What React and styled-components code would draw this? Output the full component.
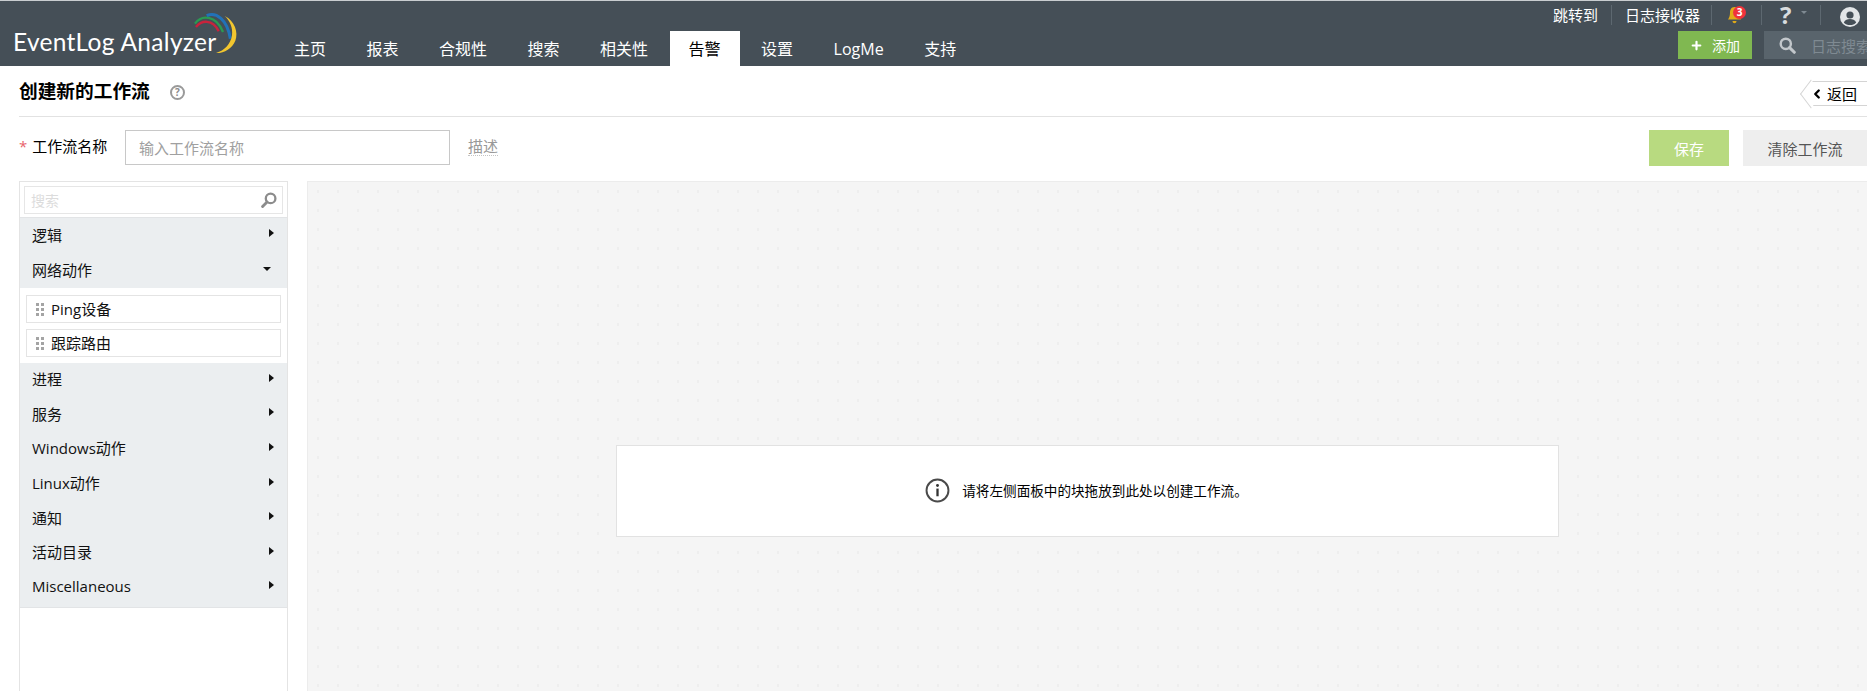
import React from 'react'
import styled, {createGlobalStyle} from 'styled-components'
import {Plus, ChevronLeft} from 'lucide-react'

const FONT = `"Open Sans", "Noto Sans CJK SC", sans-serif`

const GlobalStyle = createGlobalStyle`
  html, body {
    margin: 0;
    padding: 0;
    height: 100%;
    overflow: hidden;
    background: #fff;
    font-family: ${FONT};
  }
  * { box-sizing: border-box; }
`

const Page = styled.div`
  width: 1867px;
  height: 691px;
  display: flex;
  flex-direction: column;
  overflow: hidden;
`

const Header = styled.header`
  height: 66px;
  flex: none;
  background: #454f57;
  border-top: 1px solid #c9cdd0;
  display: flex;
  align-items: flex-end;
  color: #fff;
`

const Logo = styled.div`
  position: relative;
  width: 275px;
  flex: none;
  height: 65px;
  padding: 25px 0 0 13px;
  font-family: "Lato", "Open Sans", sans-serif;
  font-size: 24.5px;
  line-height: 32px;
  white-space: nowrap;
  letter-spacing: 0.3px;
  svg {
    position: absolute;
    left: 180px;
    top: 7px;
  }
`

const Nav = styled.nav`
  display: flex;
  gap: 2.5px;
  height: 35px;
`

const Tab = styled.div`
  padding: 6px 19px 0;
  font-size: 16px;
  line-height: 24px;
  background: ${p => (p.$active ? '#fff' : 'transparent')};
  color: ${p => (p.$active ? '#000' : '#fff')};
`

const HeaderRight = styled.div`
  margin-left: auto;
  width: 316px;
  height: 65px;
  display: flex;
  flex-direction: column;
  align-items: flex-end;
  overflow: hidden;
`

const TopLinks = styled.div`
  height: 30px;
  padding-bottom: 2px;
  width: 100%;
  display: flex;
  align-items: center;
  justify-content: flex-end;
  font-size: 15px;
`

const TopLink = styled.div`
  height: 20px;
  line-height: 20px;
  padding-left: ${p => p.$pad || 0}px;
  width: ${p => p.$w}px;
  flex: none;
  border-right: ${p => (p.$noLine ? 'none' : '1px solid #5d6870')};
  display: flex;
  align-items: center;
  position: relative;
  white-space: nowrap;
  svg { flex: none; }
`

const Badge = styled.span`
  position: absolute;
  left: 21px;
  top: 1px;
  width: 13px;
  height: 13px;
  border-radius: 50%;
  background: #f0323c;
  color: #fff;
  font-size: 10px;
  line-height: 13px;
  font-weight: 700;
  text-align: center;
`

const Question = styled.span`
  font-size: 24px;
  line-height: 20px;
  font-weight: 700;
  color: #d8dcdf;
  font-family: "Open Sans", sans-serif;
`

const SmallCaret = styled.span`
  width: 0;
  height: 0;
  margin-left: 10px;
  margin-top: -6px;
  border-left: 3px solid transparent;
  border-right: 3px solid transparent;
  border-top: 3px solid #7f8a92;
`

const ActionRow = styled.div`
  display: flex;
  gap: 12px;
  height: 28px;
`

const AddButton = styled.div`
  width: 74px;
  background: #80b851;
  display: flex;
  align-items: center;
  font-size: 14px;
  padding-left: 12px;
  gap: 9px;
`

const HeaderSearch = styled.div`
  width: 103px;
  background: #59646c;
  color: #7f8a92;
  display: flex;
  align-items: center;
  font-size: 15px;
  padding-left: 15px;
  gap: 15px;
  white-space: nowrap;
  overflow: hidden;
  svg { flex: none; }
`

const Content = styled.main`
  flex: 1;
  min-height: 0;
  padding-left: 19px;
  display: flex;
  flex-direction: column;
`

const TitleBar = styled.div`
  height: 51px;
  flex: none;
  border-bottom: 1px solid #e2e2e2;
  display: flex;
  align-items: center;
  position: relative;
`

const Title = styled.h1`
  margin: 0;
  font-size: 18.7px;
  font-weight: 700;
  color: #000;
  line-height: 24px;
`

const HelpIcon = styled.span`
  margin: 3px 0 0 20px;
  width: 15px;
  height: 15px;
  border: 2px solid #9a9a9a;
  border-radius: 50%;
  color: #8a8a8a;
  font-size: 10px;
  line-height: 11px;
  font-weight: 700;
  text-align: center;
  font-family: "Open Sans", sans-serif;
`

const BackButton = styled.div`
  position: absolute;
  right: -10px;
  top: 15px;
  width: 67px;
  height: 25px;
  border: 1px solid #d4d4d4;
  border-left: none;
  display: flex;
  align-items: center;
  font-size: 15px;
  color: #000;
  background: #fff;
  gap: 3px;
  &::before {
    content: '';
    position: absolute;
    left: -8px;
    top: 3px;
    width: 17px;
    height: 17px;
    border-left: 1px solid #d4d4d4;
    border-bottom: 1px solid #d4d4d4;
    background: #fff;
    transform: rotate(45deg) skew(8deg, 8deg);
  }
  svg, span { position: relative; }
`

const FormRow = styled.div`
  height: 64px;
  flex: none;
  display: flex;
  align-items: flex-start;
  padding-top: 13px;
`

const Label = styled.label`
  width: 106px;
  flex: none;
  font-size: 15px;
  line-height: 32px;
  color: #000;
  white-space: nowrap;
  em {
    font-style: normal;
    color: #e8636b;
    margin-right: 5px;
  }
`

const NameInput = styled.input`
  width: 325px;
  height: 35px;
  border: 1px solid #c8c8c8;
  padding: 0 13px;
  font-family: ${FONT};
  font-size: 15px;
  outline: none;
  &::placeholder { color: #a0a0a0; opacity: 1; }
`

const DescLink = styled.span`
  margin: 7px 0 0 18px;
  font-size: 15px;
  line-height: 18px;
  color: #999;
  border-bottom: 1px dotted #c4c4c4;
`

const Buttons = styled.div`
  margin-left: auto;
  display: flex;
  gap: 14px;
`

const Button = styled.div`
  width: ${p => p.$w}px;
  height: 36px;
  display: flex;
  align-items: center;
  justify-content: center;
  font-size: 15px;
  background: ${p => p.$bg};
  color: ${p => p.$color};
`

const Workspace = styled.div`
  flex: 1;
  min-height: 0;
  display: flex;
  gap: 19px;
`

const Palette = styled.aside`
  width: 269px;
  flex: none;
  border: 1px solid #e4e4e4;
  border-width: 1px 1px 0 1px;
  background: #fff;
`

const PaletteSearch = styled.div`
  margin: 4px 4px 3px;
  height: 28px;
  border: 1px solid #e6e6e6;
  display: flex;
  align-items: center;
  justify-content: space-between;
  padding: 0 5px 0 6px;
  font-size: 14px;
  color: #dcdcdc;
`

const Group = styled.div`
  background: #ebeef0;
  border-top: ${p => (p.$lined ? '1px solid #e2e4e6' : 'none')};
  border-bottom: ${p => (p.$closed ? '1px solid #e2e4e6' : 'none')};
  padding-bottom: ${p => (p.$closed ? '2px' : '0')};
`

const GroupRow = styled.div`
  height: ${p => p.$h}px;
  display: flex;
  align-items: center;
  justify-content: space-between;
  padding: 0 13px 3px 12px;
  font-size: 15px;
  color: #111;
`

const Arrow = styled.span`
  width: 0;
  height: 0;
  ${p => p.$open
    ? `
    margin: 0 3px 0 0;
    border-left: 4px solid transparent;
    border-right: 4px solid transparent;
    border-top: 4px solid #111;`
    : `
    margin-top: -2px;
    border-top: 4.5px solid transparent;
    border-bottom: 4.5px solid transparent;
    border-left: 5.5px solid #111;`}
`

const Items = styled.div`
  padding: 7px 6px 6px;
  display: flex;
  flex-direction: column;
  gap: 6px;
`

const Item = styled.div`
  height: 28px;
  border: 1px solid #e4e4e4;
  display: flex;
  align-items: center;
  padding: 0 0 1px 8px;
  gap: 7px;
  font-size: 15px;
  color: #111;
`

const Grip = styled.span`
  width: 9px;
  height: 14px;
  flex: none;
  background-image: radial-gradient(circle, #a4a4a4 1.5px, transparent 1.8px);
  background-size: 5px 5px;
`

const Canvas = styled.section`
  flex: 1;
  min-width: 0;
  border: 1px solid #ececec;
  border-bottom: none;
  border-right: none;
  background-color: #f5f5f5;
  background-image: radial-gradient(circle, #eeeeee 1.2px, transparent 1.5px);
  background-size: 20px 19px;
  display: flex;
  justify-content: center;
  align-items: flex-start;
  padding: 263px 0 0;
`

const Notice = styled.div`
  width: 943px;
  height: 92px;
  background: #fff;
  border: 1px solid #e2e2e2;
  display: flex;
  align-items: center;
  justify-content: center;
  gap: 12px;
  font-size: 13.6px;
  color: #000;
  padding-right: 2px;
  padding-bottom: 2px;
`

const tabs = ['主页', '报表', '合规性', '搜索', '相关性', '告警', '设置', 'LogMe', '支持']
const after = ['进程', '服务', 'Windows动作', 'Linux动作', '通知', '活动目录', 'Miscellaneous']

function LogoArcs() {
  return (
    <svg width="70" height="52" viewBox="0 0 210 156" fill="none">
      <path d="M48 57 C62 38 98 30 116 70" stroke="#c8233c" strokeWidth="7" />
      <path d="M45 47 C64 20 108 20 129 72" stroke="#2a9a52" strokeWidth="7" />
      <path d="M80 23 C108 10 142 34 151 92" stroke="#2272b8" strokeWidth="9" />
      <path d="M134 24 C164 38 176 74 166 98 C156 122 132 136 108 135 C134 128 152 108 156 82 C159 60 150 38 134 24 Z" fill="#f2c62f" />
    </svg>
  )
}

function Bell() {
  return (
    <svg width="15" height="18" viewBox="0 0 14 18">
      <path d="M7 1 C3.5 1 2.5 4 2.5 7 C2.5 10 1.5 12 0.5 13.5 L13.5 13.5 C12.5 12 11.5 10 11.5 7 C11.5 4 10.5 1 7 1 Z" fill="#e0aa18" />
      <path d="M5 15 H9 C9 16.5 8 17.2 7 17.2 C6 17.2 5 16.5 5 15 Z" fill="#e0aa18" />
    </svg>
  )
}

function Avatar() {
  return (
    <svg width="20" height="20" viewBox="0 0 20 20" style={{marginTop: 3}}>
      <circle cx="10" cy="10" r="10" fill="#e2e5e7" />
      <circle cx="10" cy="8" r="3.6" fill="#454f57" />
      <path d="M3.8 15.4 C5 12.6 7.5 12 10 12 C12.5 12 15 12.6 16.2 15.4 C14.5 17.2 12.4 18 10 18 C7.6 18 5.5 17.2 3.8 15.4 Z" fill="#454f57" />
    </svg>
  )
}

function InfoIcon() {
  return (
    <svg width="25" height="25" viewBox="0 0 26 26" fill="none">
      <circle cx="13" cy="13" r="11.4" stroke="#4a4a4a" strokeWidth="2" />
      <circle cx="13" cy="7.8" r="1.5" fill="#333" />
      <path d="M13 11 V19" stroke="#333" strokeWidth="2.4" />
    </svg>
  )
}

// magnifier, handle lower-left in the palette and lower-right in the header
function Magnifier({size, color, flip}) {
  return (
    <svg width={size} height={size} viewBox="0 0 18 18" fill="none" style={flip ? {transform: 'scaleX(-1)'} : undefined}>
      <circle cx="7.2" cy="7.2" r="5.4" stroke={color} strokeWidth="2.6" />
      <path d="M11.2 11.2 L16.2 16.2" stroke={color} strokeWidth="3.2" strokeLinecap="round" />
    </svg>
  )
}

function App() {
  return (
    <Page>
      <GlobalStyle />
      <Header>
        <Logo>
          EventLog Analyzer
          <LogoArcs />
        </Logo>
        <Nav>
          {tabs.map(t => (
            <Tab key={t} $active={t === '告警'}>{t}</Tab>
          ))}
        </Nav>
        <HeaderRight>
          <TopLinks>
            <TopLink $w={59}>跳转到</TopLink>
            <TopLink $w={100} $pad={13}>日志接收器</TopLink>
            <TopLink $w={50} $pad={15}><Bell /><Badge>3</Badge></TopLink>
            <TopLink $w={59} $pad={18}><Question>?</Question><SmallCaret /></TopLink>
            <TopLink $w={46} $pad={19} $noLine><Avatar /></TopLink>
          </TopLinks>
          <ActionRow>
            <AddButton><Plus size={13} strokeWidth={4} />添加</AddButton>
            <HeaderSearch><Magnifier size={17} color="#c2c7cb" />日志搜索</HeaderSearch>
          </ActionRow>
        </HeaderRight>
      </Header>
      <Content>
        <TitleBar>
          <Title>创建新的工作流</Title>
          <HelpIcon>?</HelpIcon>
          <BackButton>
            <ChevronLeft size={14} strokeWidth={4} />
            <span>返回</span>
          </BackButton>
        </TitleBar>
        <FormRow>
          <Label><em>*</em>工作流名称</Label>
          <NameInput placeholder="输入工作流名称" />
          <DescLink>描述</DescLink>
          <Buttons>
            <Button $w={80} $bg="#b8da80" $color="#fff">保存</Button>
            <Button $w={124} $bg="#eeeeee" $color="#555">清除工作流</Button>
          </Buttons>
        </FormRow>
        <Workspace>
          <Palette>
            <PaletteSearch>
              搜索
              <Magnifier size={16} color="#8c8c8c" flip />
            </PaletteSearch>
            <Group $lined>
              <GroupRow $h={35}>逻辑<Arrow /></GroupRow>
              <GroupRow $h={35}>网络动作<Arrow $open /></GroupRow>
            </Group>
            <Items>
              <Item><Grip />Ping设备</Item>
              <Item><Grip />跟踪路由</Item>
            </Items>
            <Group $closed>
              {after.map(g => (
                <GroupRow key={g} $h={34.6}>{g}<Arrow /></GroupRow>
              ))}
            </Group>
          </Palette>
          <Canvas>
            <Notice>
              <InfoIcon />
              请将左侧面板中的块拖放到此处以创建工作流。
            </Notice>
          </Canvas>
        </Workspace>
      </Content>
    </Page>
  )
}

export default App
